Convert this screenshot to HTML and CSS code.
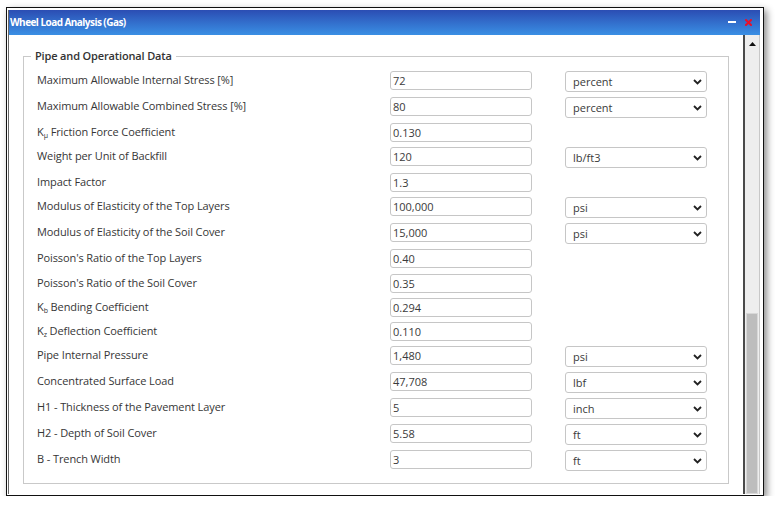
FILE: index.html
```html
<!DOCTYPE html>
<html>
<head>
<meta charset="utf-8">
<link rel="stylesheet" href="styles.css">
</head>
<body>
<div class="frame">
  <div class="window">
    <div class="titlebar">
      <span class="title">Wheel Load Analysis (Gas)</span>
      <div class="tools">
        <span class="min"></span>
        <svg class="close" width="7" height="7" viewBox="0 0 7 7"><path d="M1 1L6 6M6 1L1 6" stroke="#e8102a" stroke-width="2" stroke-linecap="square"/></svg>
      </div>
    </div>
    <div class="body">
      <div class="content">
        <fieldset class="group">
          <legend>Pipe and Operational Data</legend>
          <div class="row sel"><span class="label">Maximum Allowable Internal Stress [%]</span><span class="input">72</span><div class="select"><span>percent</span><svg width="9" height="6" viewBox="0 0 9 6"><path d="M1 1L4.5 4.5L8 1" fill="none" stroke="#222" stroke-width="1.8"/></svg></div></div>
          <div class="row sel"><span class="label">Maximum Allowable Combined Stress [%]</span><span class="input">80</span><div class="select"><span>percent</span><svg width="9" height="6" viewBox="0 0 9 6"><path d="M1 1L4.5 4.5L8 1" fill="none" stroke="#222" stroke-width="1.8"/></svg></div></div>
          <div class="row"><span class="label">K<sub>μ</sub> Friction Force Coefficient</span><span class="input">0.130</span></div>
          <div class="row sel"><span class="label">Weight per Unit of Backfill</span><span class="input">120</span><div class="select"><span>lb/ft3</span><svg width="9" height="6" viewBox="0 0 9 6"><path d="M1 1L4.5 4.5L8 1" fill="none" stroke="#222" stroke-width="1.8"/></svg></div></div>
          <div class="row"><span class="label">Impact Factor</span><span class="input">1.3</span></div>
          <div class="row sel"><span class="label">Modulus of Elasticity of the Top Layers</span><span class="input">100,000</span><div class="select"><span>psi</span><svg width="9" height="6" viewBox="0 0 9 6"><path d="M1 1L4.5 4.5L8 1" fill="none" stroke="#222" stroke-width="1.8"/></svg></div></div>
          <div class="row sel"><span class="label">Modulus of Elasticity of the Soil Cover</span><span class="input">15,000</span><div class="select"><span>psi</span><svg width="9" height="6" viewBox="0 0 9 6"><path d="M1 1L4.5 4.5L8 1" fill="none" stroke="#222" stroke-width="1.8"/></svg></div></div>
          <div class="row"><span class="label">Poisson's Ratio of the Top Layers</span><span class="input">0.40</span></div>
          <div class="row"><span class="label">Poisson's Ratio of the Soil Cover</span><span class="input">0.35</span></div>
          <div class="row"><span class="label">K<sub>b</sub> Bending Coefficient</span><span class="input">0.294</span></div>
          <div class="row"><span class="label">K<sub>z</sub> Deflection Coefficient</span><span class="input">0.110</span></div>
          <div class="row sel"><span class="label">Pipe Internal Pressure</span><span class="input">1,480</span><div class="select"><span>psi</span><svg width="9" height="6" viewBox="0 0 9 6"><path d="M1 1L4.5 4.5L8 1" fill="none" stroke="#222" stroke-width="1.8"/></svg></div></div>
          <div class="row sel"><span class="label">Concentrated Surface Load</span><span class="input">47,708</span><div class="select"><span>lbf</span><svg width="9" height="6" viewBox="0 0 9 6"><path d="M1 1L4.5 4.5L8 1" fill="none" stroke="#222" stroke-width="1.8"/></svg></div></div>
          <div class="row sel"><span class="label">H1 - Thickness of the Pavement Layer</span><span class="input">5</span><div class="select"><span>inch</span><svg width="9" height="6" viewBox="0 0 9 6"><path d="M1 1L4.5 4.5L8 1" fill="none" stroke="#222" stroke-width="1.8"/></svg></div></div>
          <div class="row sel"><span class="label">H2 - Depth of Soil Cover</span><span class="input">5.58</span><div class="select"><span>ft</span><svg width="9" height="6" viewBox="0 0 9 6"><path d="M1 1L4.5 4.5L8 1" fill="none" stroke="#222" stroke-width="1.8"/></svg></div></div>
          <div class="row sel"><span class="label">B - Trench Width</span><span class="input">3</span><div class="select"><span>ft</span><svg width="9" height="6" viewBox="0 0 9 6"><path d="M1 1L4.5 4.5L8 1" fill="none" stroke="#222" stroke-width="1.8"/></svg></div></div>
        </fieldset>
      </div>
      <div class="scrollbar">
        <div class="arrow"><svg width="7" height="4" viewBox="0 0 7 4"><path d="M0 4L3.5 0L7 4Z" fill="#111"/></svg></div>
        <div class="track"></div>
        <div class="thumb"></div>
      </div>
    </div>
  </div>
</div>
</body>
</html>
```

FILE: styles.css
```css
* { box-sizing: border-box; }
html, body { margin: 0; padding: 0; background: #fff; }
body { font-family: "Open Sans", "Noto Sans", sans-serif; }

.frame {
  margin: 7px 0 0 6px;
  width: 758px;
  height: 489px;
  border: 1px solid #111;
  padding: 2px 3px 1px 1px;
  background: #fff;
  box-shadow: 3px 3px 7px rgba(0,0,0,0.45);
}
.window {
  height: 100%;
  display: flex;
  flex-direction: column;
  border-left: 1px solid #666;
}
.titlebar {
  height: 25px;
  flex: none;
  background: linear-gradient(#2b4db3, #3a8fe4);
  display: flex;
  align-items: center;
  justify-content: space-between;
  padding: 0 8px 0 1px;
}
.title {
  color: #fff;
  font-weight: 700;
  font-size: 10px;
  letter-spacing: -0.55px;
  margin-top: -2px;
}
.tools { display: flex; align-items: center; gap: 9px; margin-top: -1px; }
.min { width: 8px; height: 2px; background: #fff; display: block; }
.close { display: block; }

.body { flex: 1; display: flex; min-height: 0; }
.content { flex: 1; padding: 14px 14px 0 14px; }
.group {
  margin: 0;
  border: 1px solid #c9c9c9;
  padding: 8px 13px 7px 13px;
  min-width: 0;
}
.group legend {
  font-size: 11px;
  color: #333;
  font-weight: 600;
  letter-spacing: -0.15px;
  padding: 0 4px;
  margin-left: -6px;
  line-height: 14px;
}
.row {
  display: flex;
  align-items: flex-start;
  height: 24.2px;
}
.row.sel { height: 26px; }
.label {
  width: 353px;
  flex: none;
  font-size: 11px;
  letter-spacing: -0.1px;
  line-height: 17px;
  color: #363636;
}
.label sub { font-size: 7px; vertical-align: -2px; line-height: 0; }
.input {
  width: 142px;
  height: 19px;
  flex: none;
  border: 1px solid #c6c6c6;
  border-radius: 3px;
  font-size: 11px;
  line-height: 17px;
  padding-left: 2px;
  color: #3a3a3a;
}
.select {
  width: 142px;
  height: 21px;
  flex: none;
  margin-left: 33px;
  border: 1px solid #c6c6c6;
  border-radius: 3px;
  display: flex;
  align-items: center;
  justify-content: space-between;
  padding: 0 4px 0 7px;
  font-size: 11px;
  color: #3a3a3a;
}
.select svg { display: block; }

.scrollbar {
  width: 17px;
  flex: none;
  border-left: 2px solid #4a4a4a;
  border-right: 1px solid #c8c8c8;
  background: #eeeeee;
  display: flex;
  flex-direction: column;
  position: relative;
}
.arrow { height: 16px; display: flex; align-items: center; justify-content: center; padding-top: 2px; }
.track { flex: 1; }
.thumb {
  position: absolute;
  left: 1px; right: 1px;
  top: 278px; bottom: 0;
  background: #bdbdbd;
  border: 1px solid #d8d8d8;
}
```
